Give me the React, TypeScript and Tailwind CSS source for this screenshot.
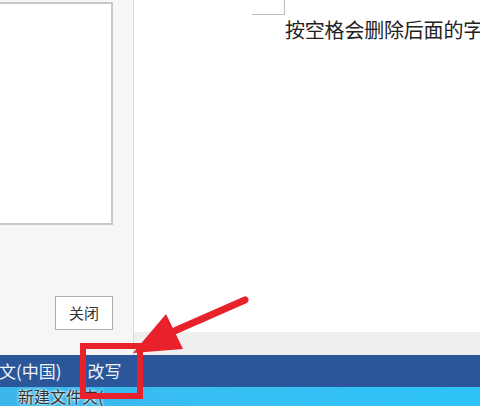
import React from "react";

const cjk = { fontFamily: '"Microsoft YaHei", "Noto Sans CJK SC", sans-serif' };

const RedArrow = () => (
  <svg
    className="pointer-events-none absolute left-0 top-0"
    width="480"
    height="406"
    viewBox="0 0 480 406"
  >
    <line x1="245" y1="300" x2="163" y2="336" stroke="#e8212b" strokeWidth="7" strokeLinecap="round" />
    <polygon points="133,353 166,314 183,349" fill="#e8212b" />
    <rect x="83" y="346" width="57" height="50" fill="none" stroke="#e8212b" strokeWidth="6" />
  </svg>
);

export default function App() {
  return (
    <div className="relative flex h-[406px] w-[480px] flex-col overflow-hidden bg-white" style={cjk}>
      <div className="flex h-[355px] flex-row">
        {/* 左侧面板 */}
        <div className="flex w-[134px] shrink-0 flex-col border-r border-[#d9d9d9] bg-[#f6f6f6]">
          <div className="mt-[2px] h-[223px] w-[113px] border-r-2 border-t-2 border-b-2 border-[#c8c8c8] bg-white" />
          <div className="flex flex-1 flex-col items-end pr-[20px] pt-[71px]">
            <button className="flex h-[34px] w-[58px] items-center justify-center border border-[#adadad] bg-white text-[15px] text-[#333]">
              关闭
            </button>
          </div>
        </div>
        {/* 文档区域 */}
        <div className="flex min-w-0 flex-1 flex-col overflow-hidden">
          <div className="flex-1 bg-white">
            <div className="ml-[118px] h-[15px] w-[33px] border-b border-r border-[#bdbdbd]" />
            <p className="ml-[151px] mt-[1px] whitespace-nowrap text-[20px] leading-[28px] tracking-[-0.2px] text-[#222]">
              按空格会删除后面的字
            </p>
          </div>
          <div className="h-[23px] bg-[#efefef]" />
        </div>
      </div>
      {/* 状态栏 */}
      <div className="flex h-[32px] items-center bg-[#2b579a] text-[17px] text-[#eef2fa]">
        <span className="ml-[-1px]">文(中国)</span>
        <span className="ml-[26px]">改写</span>
      </div>
      {/* 任务栏 */}
      <div className="h-[19px] bg-gradient-to-r from-[#3cb6ec] via-[#36bff3] to-[#2dc3f5]">
        <span
          className="ml-[18px] block whitespace-nowrap text-[16px] leading-[19px] text-[#333]"
          style={{ textShadow: "0 0 3px #fff, 0 0 3px #fff" }}
        >
          新建文件夹(
        </span>
      </div>
      <RedArrow />
    </div>
  );
}
